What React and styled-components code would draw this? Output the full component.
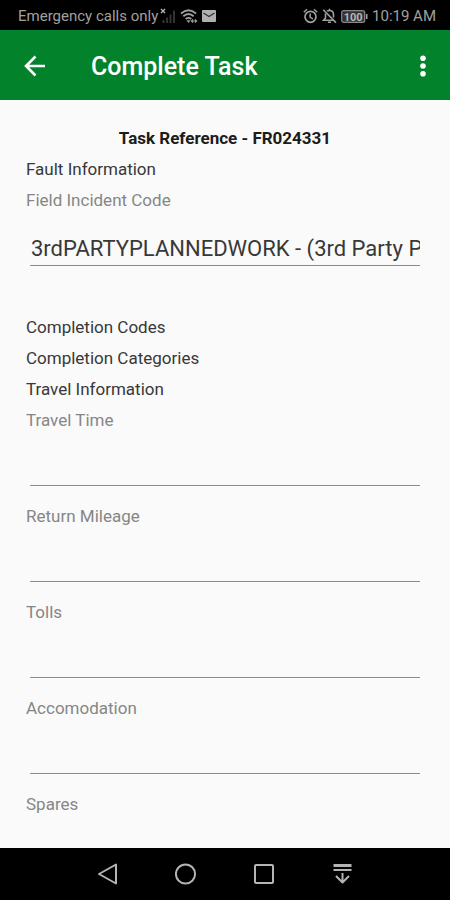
import React from 'react';
import styled, { createGlobalStyle } from 'styled-components';

const GlobalStyle = createGlobalStyle`
  * {
    box-sizing: border-box;
  }

  body {
    margin: 0;
    font-family: Roboto, 'Liberation Sans', sans-serif;
    background: #fafafa;
  }
`;

const AppWrapper = styled.div`
  display: flex;
  flex-direction: column;
  height: 100vh;
`;

const StatusBar = styled.div`
  display: flex;
  flex: none;
  align-items: center;
  justify-content: space-between;
  height: 30px;
  padding: 2px 14px 0 18px;
  background: #000;
  color: #a0a0a0;
  font-size: 15px;
  line-height: 20px;
`;

const StatusGroup = styled.div`
  display: flex;
  align-items: center;
  gap: ${({ $gap }) => $gap}px;
`;

const Toolbar = styled.header`
  display: flex;
  flex: none;
  align-items: center;
  height: 70px;
  padding: 2px 10px 0 18px;
  background: #02832b;
  color: #fff;
`;

const IconButton = styled.button`
  display: flex;
  align-items: center;
  justify-content: center;
  width: 34px;
  height: 40px;
  padding: 0;
  border: 0;
  background: none;
  color: inherit;
`;

const Title = styled.h1`
  flex: 1;
  margin: 0 0 0 39px;
  padding-top: 2px;
  font-size: 25px;
  font-weight: 500;
  line-height: 32px;
`;

const Content = styled.main`
  flex: 1;
  min-height: 0;
  padding: 23px 26px 0;
  overflow-y: auto;
  scrollbar-width: none;
  color: #383838;
  font-size: 17px;
  line-height: 31px;
`;

const Reference = styled.h2`
  margin: 0;
  color: #1c1c1c;
  font-size: 17px;
  font-weight: 700;
  line-height: 31px;
  text-align: center;
`;

const SectionTitle = styled.h3`
  margin: 0;
  font-size: 17px;
  font-weight: 400;
  line-height: 31px;
`;

const Field = styled.div`
  display: flex;
  flex-direction: column;
  margin-bottom: ${({ $spaced }) => ($spaced ? 46 : 15)}px;
`;

const Label = styled.label`
  color: #868686;
`;

const Input = styled.input`
  height: 50px;
  margin: 0 4px;
  padding: 15px 0 0 1px;
  border: 0;
  border-bottom: 1px solid #8c8c8c;
  border-radius: 0;
  outline: 0;
  background: none;
  color: #383838;
  font-family: inherit;
  font-size: 22px;
`;

const NavBar = styled.nav`
  display: flex;
  flex: none;
  align-items: center;
  justify-content: center;
  gap: 44px;
  height: 52px;
  background: #000;
  color: #b4b4b4;
`;

const SignalIcon = () => (
  <svg width="16" height="16" viewBox="0 0 16 16">
    <path d="M1 1l4 4M5 1L1 5" stroke="#b0b0b0" strokeWidth="1.4" />
    <path
      d="M3.5 15v-3M7 15V9.500M10.500 15V6.500M14 15V2.500"
      stroke="#333"
      strokeWidth="2"
    />
  </svg>
);

const WifiIcon = () => (
  <svg width="18" height="16" viewBox="0 0 18 16" fill="none" stroke="currentColor">
    <path d="M1 5.500q7.500-6.500 15 0" strokeWidth="1.800" />
    <path d="M3.300 8.300q5.200-4.500 10.400 0" strokeWidth="1.800" />
    <path d="M5.700 11q2.800-2.300 5.600 0" strokeWidth="1.800" />
    <path d="M6.500 12.300h4L8.500 15z" fill="currentColor" stroke="none" />
    <path d="M11.500 13h5M13 11.300l-1.600 1.700 1.600 1.700M15 11.300l1.600 1.700-1.600 1.700" strokeWidth="1.100" />
  </svg>
);

const MailIcon = () => (
  <svg width="14" height="12" viewBox="0 0 14 12">
    <rect width="14" height="12" rx="1" fill="#b0b0b0" />
    <path d="M1.500 3L7 6.500 12.500 3" fill="none" stroke="#333" strokeWidth="1.300" />
  </svg>
);

const AlarmIcon = () => (
  <svg width="15" height="16" viewBox="0 0 15 16" fill="none" stroke="currentColor">
    <circle cx="7.500" cy="8.800" r="5.500" strokeWidth="1.700" />
    <path d="M7.200 5.500v3.800l2.800 1.500M.8 4.200L4 1.300M14.200 4.200L11 1.300" strokeWidth="1.500" />
  </svg>
);

const BellOffIcon = () => (
  <svg width="15" height="16" viewBox="0 0 15 16" fill="none" stroke="currentColor">
    <path
      d="M3.500 5.500V10L1.500 12.300H12M5 3.300q.8-.8 2.500-.8 4 0 4 4.200V9.500M7.500 2.500V.8M6 14.300h3"
      strokeWidth="1.600"
    />
    <path d="M1.200 1.800L14 14.600" strokeWidth="1.600" />
  </svg>
);

const BatteryIcon = () => (
  <svg width="27" height="13" viewBox="0 0 27 13">
    <rect x=".7" y=".7" width="23" height="11.600" rx="2" fill="#333" stroke="#888" strokeWidth="1.200" />
    <path d="M25.700 4v5" stroke="currentColor" strokeWidth="1.600" />
    <text x="12.200" y="10.500" textAnchor="middle" fontSize="11" fontWeight="700" fill="#b8b8b8">
      100
    </text>
  </svg>
);

const BackArrowIcon = () => (
  <svg width="22" height="22" viewBox="0 0 22 22" fill="none" stroke="currentColor" strokeWidth="2.600">
    <path d="M21 11H3M11.500 1.500L2 11l9.500 9.500" />
  </svg>
);

const MoreIcon = () => (
  <svg width="6" height="22" viewBox="0 0 6 22" fill="currentColor">
    <circle cx="3" cy="3.300" r="2.800" />
    <circle cx="3" cy="11" r="2.800" />
    <circle cx="3" cy="18.700" r="2.800" />
  </svg>
);

const NavIcon = ({ children }) => (
  <svg
    width="22"
    height="22"
    viewBox="0 0 22 22"
    fill="none"
    stroke="currentColor"
    strokeWidth="2"
    strokeLinejoin="round"
  >
    {children}
  </svg>
);

const FormField = ({ id, label, value, spaced }) => (
  <Field $spaced={spaced}>
    <Label htmlFor={id}>{label}</Label>
    <Input id={id} type="text" defaultValue={value} />
  </Field>
);

const Header = () => (
  <Toolbar>
    <IconButton aria-label="Back">
      <BackArrowIcon />
    </IconButton>
    <Title>Complete Task</Title>
    <IconButton aria-label="More options">
      <MoreIcon />
    </IconButton>
  </Toolbar>
);

const Navigation = () => (
  <NavBar>
    <IconButton aria-label="Back">
      <NavIcon>
        <path d="M19 1.500v19L2 11z" />
      </NavIcon>
    </IconButton>
    <IconButton aria-label="Home">
      <NavIcon>
        <circle cx="10.500" cy="11" r="9.600" />
      </NavIcon>
    </IconButton>
    <IconButton aria-label="Recent apps">
      <NavIcon>
        <rect x="2" y="2" width="18" height="18" rx="1" />
      </NavIcon>
    </IconButton>
    <IconButton aria-label="Notifications">
      <NavIcon>
        <path d="M2.500 2.500h18" strokeWidth="3" />
        <path d="M2.500 7h18M11.500 10v9.500M5 13l6.500 6.500 6.500-6.500" />
      </NavIcon>
    </IconButton>
  </NavBar>
);

const App = () => {
  return (
    <AppWrapper>
      <GlobalStyle />
      <StatusBar>
        <StatusGroup $gap={4}>
          <StatusGroup $gap={2}>
            <span>Emergency calls only</span>
            <SignalIcon />
          </StatusGroup>
          <WifiIcon />
          <MailIcon />
        </StatusGroup>
        <StatusGroup $gap={4}>
          <AlarmIcon />
          <BellOffIcon />
          <BatteryIcon />
          <span>10:19 AM</span>
        </StatusGroup>
      </StatusBar>
      <Header />
      <Content>
        <Reference>Task Reference - FR024331</Reference>
        <SectionTitle>Fault Information</SectionTitle>
        <FormField
          id="incident"
          label="Field Incident Code"
          value="3rdPARTYPLANNEDWORK - (3rd Party Planned Work)"
          spaced
        />
        <SectionTitle>Completion Codes</SectionTitle>
        <SectionTitle>Completion Categories</SectionTitle>
        <SectionTitle>Travel Information</SectionTitle>
        <FormField id="travel-time" label="Travel Time" />
        <FormField id="mileage" label="Return Mileage" />
        <FormField id="tolls" label="Tolls" />
        <FormField id="accomodation" label="Accomodation" />
        <FormField id="spares" label="Spares" />
      </Content>
      <Navigation />
    </AppWrapper>
  );
};

export default App;
